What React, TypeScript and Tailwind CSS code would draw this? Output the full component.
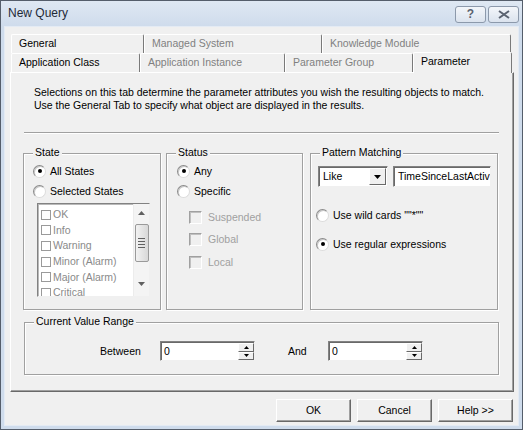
import React from "react";

type TabProps = {
  label: string;
  width: number;
  disabled?: boolean;
  selected?: boolean;
};

function Tab({ label, width, disabled, selected }: TabProps) {
  return (
    <div
      style={{ width }}
      className={
        "flex items-center pl-[7px] border-l border-t border-white border-r border-r-[#7a7a7a] rounded-t-[2px] bg-[#f0f0f0] " +
        (selected ? "relative z-10 h-[21px] -mb-[1px] pb-[3px] " : "h-[19px] pb-[1px] ") +
        (disabled ? "text-[#808080]" : "text-black")
      }
    >
      {label}
    </div>
  );
}

function Radio({ checked }: { checked?: boolean }) {
  return (
    <span className="flex items-center justify-center w-[13px] h-[13px] rounded-full bg-white border border-t-[#8a8a8a] border-l-[#8a8a8a] border-b-[#dcdcdc] border-r-[#dcdcdc] shadow-[inset_1px_1px_0_#c8c8c8]">
      {checked && <span className="w-[4px] h-[4px] rounded-full bg-black" />}
    </span>
  );
}

function RadioRow({ label, checked }: { label: string; checked?: boolean }) {
  return (
    <div className="flex items-center h-[20px] gap-[4px]">
      <Radio checked={checked} />
      <span>{label}</span>
    </div>
  );
}

function DisabledCheck({ label }: { label: string }) {
  return (
    <div className="flex items-center h-[22.5px] gap-[6px] text-[#a0a0a0]">
      <span className="w-[13px] h-[13px] bg-[#f0f0f0] border border-t-[#a0a0a0] border-l-[#a0a0a0] border-b-white border-r-white shadow-[inset_1px_1px_0_#c0c0c0]" />
      <span>{label}</span>
    </div>
  );
}

function Group({
  label,
  className,
  children,
}: {
  label: string;
  className: string;
  children: React.ReactNode;
}) {
  return (
    <div
      className={
        "relative border border-[#a0a0a0] shadow-[inset_1px_1px_0_#fff,1px_1px_0_#fff] " +
        className
      }
    >
      <span className="absolute -top-[9px] left-[9px] bg-[#f0f0f0] px-[2px] leading-[14px]">
        {label}
      </span>
      {children}
    </div>
  );
}

function SpinBox() {
  return (
    <div className="flex w-[95px] h-[20px] bg-white border border-t-[#828282] border-l-[#828282] border-b-[#f0f0f0] border-r-[#f0f0f0] shadow-[inset_1px_1px_0_#696969]">
      <span className="flex-1 pl-[3px] pt-[1px] leading-[16px]">0</span>
      <div className="flex flex-col w-[16px] mt-[1px]">
        <SpinButton up />
        <SpinButton />
      </div>
    </div>
  );
}

function SpinButton({ up }: { up?: boolean }) {
  return (
    <div className="flex items-center justify-center h-[9px] bg-[#f0f0f0] border border-t-white border-l-white border-b-[#696969] border-r-[#696969]">
      <svg width="5" height="3" viewBox="0 0 5 3">
        {up ? <path d="M2.5 0L5 3H0z" fill="#000" /> : <path d="M0 0h5L2.5 3z" fill="#000" />}
      </svg>
    </div>
  );
}

function Button({ label }: { label: string }) {
  return (
    <div className="flex items-center justify-center w-[75px] h-[23px] bg-[#f0f0f0] border border-t-white border-l-white border-b-[#696969] border-r-[#696969] shadow-[inset_-1px_-1px_0_#a0a0a0]">
      {label}
    </div>
  );
}

const states = ["OK", "Info", "Warning", "Minor (Alarm)", "Major (Alarm)", "Critical"];

export default function App() {
  return (
    <div className="w-[523px] h-[430px] flex flex-col bg-[#cfdcec] border border-[#555e6b] font-['Liberation_Sans',Arial,sans-serif] text-[10.5px] leading-[13px] text-black overflow-hidden">
      {/* Title bar */}
      <div className="flex items-center h-[25px] pl-[7px] pr-[3px] bg-gradient-to-b from-[#dfe8f3] to-[#cfdcec]">
        <span className="flex-1 text-[12px] text-[#1e2a38]">New Query</span>
        <div className="flex gap-[2px] mt-[1px]">
          <div className="flex items-center justify-center w-[31px] h-[17px] rounded-[3px] border border-[#8c99ab] bg-gradient-to-b from-[#f3f6fa] to-[#dbe3ee] text-[#5a6270] text-[12px] font-bold">
            ?
          </div>
          <div className="flex items-center justify-center w-[31px] h-[17px] rounded-[3px] border border-[#8c99ab] bg-gradient-to-b from-[#f3f6fa] to-[#dbe3ee]">
            <svg width="12" height="9" viewBox="0 0 12 9">
              <path d="M1 1L11 8M11 1L1 8" stroke="#5a6270" strokeWidth="2" />
            </svg>
          </div>
        </div>
      </div>

      {/* Client area */}
      <div className="flex-1 mx-[3px] mb-[3px] flex flex-col bg-[#f0f0f0] border border-[#e4ebf4]">
        {/* Tabs */}
        <div className="flex ml-[6px] mt-[7px]">
          <Tab label="General" width={133} />
          <Tab label="Managed System" width={178} disabled />
          <Tab label="Knowledge Module" width={189} disabled />
        </div>
        <div className="flex items-end h-[19px] ml-[6px]">
          <Tab label="Application Class" width={129} />
          <Tab label="Application Instance" width={145} disabled />
          <Tab label="Parameter Group" width={128} disabled />
          <Tab label="Parameter" width={99} selected />
        </div>

        {/* Tab panel */}
        <div className="ml-[5px] w-[504px] h-[320px] flex flex-col border border-t-white border-l-white border-b-[#696969] border-r-[#696969] shadow-[inset_-1px_-1px_0_#a0a0a0]">
          <div className="ml-[23px] mt-[13px]">
            <p>Selections on this tab determine the parameter attributes you wish the resulting objects to match.</p>
            <p>Use the General Tab to specify what object are displayed in the results.</p>
          </div>
          <div className="ml-[13px] mt-[20px] w-[475px] h-[2px] border-t border-t-[#a0a0a0] border-b border-b-white" />

          <div className="flex ml-[12px] mt-[19px] h-[157px]">
            <Group label="State" className="w-[138px] pl-[9px] pt-[7px]">
              <RadioRow label="All States" checked />
              <RadioRow label="Selected States" />
              <div className="flex ml-[4px] mt-[2px] w-[113px] h-[94px] bg-white border border-t-[#828282] border-l-[#828282] border-b-[#f0f0f0] border-r-[#f0f0f0] shadow-[inset_1px_1px_0_#b9b9b9] overflow-hidden">
                <div className="flex-1 pl-[3px] pt-[3px] text-[#8a8a8a]">
                  {states.map((s) => (
                    <div key={s} className="flex items-center gap-[2px] h-[15.6px]">
                      <span className="w-[10px] h-[10px] border border-[#9a9a9a] bg-white" />
                      <span>{s}</span>
                    </div>
                  ))}
                </div>
                <div className="flex flex-col items-center w-[16px] bg-[#f4f4f4] border-l border-l-[#ececec] py-[1px]">
                  <div className="flex items-center justify-center h-[16px]">
                    <svg width="7" height="4" viewBox="0 0 7 4">
                      <path d="M3.5 0L7 4H0z" fill="#606060" />
                    </svg>
                  </div>
                  <div className="flex flex-col items-center justify-center gap-[2px] w-[14px] h-[38px] mt-[3px] rounded-[2px] border border-[#9a9a9a] bg-gradient-to-r from-[#f2f2f2] to-[#d8d8d8]">
                    <span className="w-[7px] h-[1px] bg-[#606060]" />
                    <span className="w-[7px] h-[1px] bg-[#606060]" />
                    <span className="w-[7px] h-[1px] bg-[#606060]" />
                    <span className="w-[7px] h-[1px] bg-[#606060]" />
                  </div>
                  <div className="flex-1" />
                  <div className="flex items-center justify-center h-[16px] mb-[3px]">
                    <svg width="7" height="4" viewBox="0 0 7 4">
                      <path d="M0 0h7L3.5 4z" fill="#606060" />
                    </svg>
                  </div>
                </div>
              </div>
            </Group>

            <Group label="Status" className="ml-[5px] w-[137px] pl-[10px] pt-[7px]">
              <RadioRow label="Any" checked />
              <RadioRow label="Specific" />
              <div className="ml-[12px] mt-[5px]">
                <DisabledCheck label="Suspended" />
                <DisabledCheck label="Global" />
                <DisabledCheck label="Local" />
              </div>
            </Group>

            <Group label="Pattern Matching" className="ml-[7px] w-[188px] pl-[7px] pt-[12px]">
              <div className="flex gap-[5px]">
                <div className="flex w-[70px] h-[21px] bg-white border border-t-[#828282] border-l-[#828282] border-b-[#f0f0f0] border-r-[#f0f0f0] shadow-[inset_1px_1px_0_#696969]">
                  <span className="flex-1 pl-[4px] pt-[3px]">Like</span>
                  <div className="flex items-center justify-center w-[17px] m-[1px] bg-[#f0f0f0] border border-t-white border-l-white border-b-[#696969] border-r-[#696969]">
                    <svg width="7" height="4" viewBox="0 0 7 4">
                      <path d="M0 0h7L3.5 4z" fill="#000" />
                    </svg>
                  </div>
                </div>
                <div className="w-[98px] h-[21px] pl-[4px] pt-[3px] bg-white border border-t-[#828282] border-l-[#828282] border-b-[#f0f0f0] border-r-[#f0f0f0] shadow-[inset_1px_1px_0_#696969] overflow-hidden whitespace-nowrap">
                  TimeSinceLastActiv
                </div>
              </div>
              <div className="-ml-[2px] mt-[18px] flex flex-col gap-[9px]">
                <RadioRow label={'Use wild cards ""*""'} />
                <RadioRow label="Use regular expressions" checked />
              </div>
            </Group>
          </div>

          <Group label="Current Value Range" className="ml-[13px] mt-[12px] w-[475px] h-[53px] pt-[18px]">
            <div className="flex items-center">
              <span className="ml-[75px] w-[60px]">Between</span>
              <SpinBox />
              <span className="ml-[33px] w-[40px]">And</span>
              <SpinBox />
            </div>
          </Group>
        </div>

        {/* Dialog buttons */}
        <div className="flex justify-end gap-[6px] mr-[5px] mt-[7px]">
          <Button label="OK" />
          <Button label="Cancel" />
          <Button label="Help >>" />
        </div>
      </div>
    </div>
  );
}
